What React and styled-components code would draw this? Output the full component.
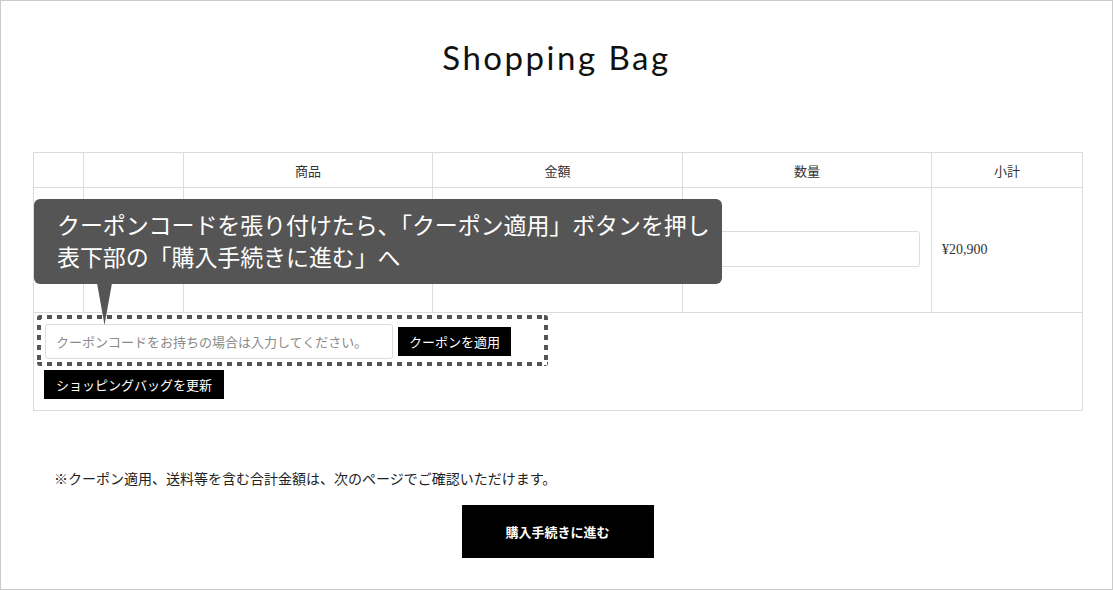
import React from 'react'
import styled, { createGlobalStyle } from 'styled-components';

const GlobalStyle = createGlobalStyle`
    html, body {
        margin: 0;
        padding: 0;
        background: #fff;
    }
    * {
        box-sizing: border-box;
    }
`;

const serif = `"Liberation Serif", "Noto Sans CJK JP", serif`;
const sans = `"Noto Sans CJK JP", "Noto Sans", sans-serif`;

const App = () => {
    return (
        <>
            <GlobalStyle />
            <Frame>
                <Title>Shopping Bag</Title>
                <TableWrap>
                    <CartTable>
                        <colgroup>
                            <col style={{ width: 50 }} />
                            <col style={{ width: 100 }} />
                            <col style={{ width: 249 }} />
                            <col style={{ width: 250 }} />
                            <col style={{ width: 249 }} />
                            <col style={{ width: 151 }} />
                        </colgroup>
                        <thead>
                            <HeadRow>
                                <HeadCell></HeadCell>
                                <HeadCell></HeadCell>
                                <HeadCell>商品</HeadCell>
                                <HeadCell>金額</HeadCell>
                                <HeadCell>数量</HeadCell>
                                <HeadCell>小計</HeadCell>
                            </HeadRow>
                        </thead>
                        <tbody>
                            <ItemRow>
                                <BodyCell></BodyCell>
                                <BodyCell></BodyCell>
                                <BodyCell></BodyCell>
                                <BodyCell></BodyCell>
                                <BodyCell $pad="0 11px">
                                    <QtyInput type="text" defaultValue="" />
                                </BodyCell>
                                <BodyCell $pad="0 10px">¥20,900</BodyCell>
                            </ItemRow>
                            <tr>
                                <ActionCell colSpan={6}>
                                    <CouponBox>
                                        <CouponInput type="text" placeholder="クーポンコードをお持ちの場合は入力してください。" />
                                        <BlackButton $w="113px" $h="29px">クーポンを適用</BlackButton>
                                    </CouponBox>
                                    <UpdateButton $w="180px" $h="29px">ショッピングバッグを更新</UpdateButton>
                                </ActionCell>
                            </tr>
                        </tbody>
                    </CartTable>
                    <Balloon>
                        クーポンコードを張り付けたら、「クーポン適用」ボタンを押し<br />
                        表下部の「購入手続きに進む」へ
                    </Balloon>
                    <BalloonTail />
                </TableWrap>
                <Note>※クーポン適用、送料等を含む合計金額は、次のページでご確認いただけます。</Note>
                <CheckoutButton>購入手続きに進む</CheckoutButton>
            </Frame>
        </>
    )
}

export default App;

const Frame = styled.div`
    width: 1113px;
    height: 590px;
    border: 1px solid #cbcbcb;
    background: #fff;
    overflow: hidden;
`;

const Title = styled.h1`
    margin: 36px 0 0;
    font-family: "Lato", "Open Sans", sans-serif;
    font-weight: 400;
    font-size: 33px;
    line-height: 40px;
    letter-spacing: 2.5px;
    text-align: center;
    color: #111;
`;

const TableWrap = styled.div`
    position: relative;
    margin: 75px 30px 0 32px;
`;

const CartTable = styled.table`
    width: 1049px;
    border-collapse: collapse;
    table-layout: fixed;
    font-family: ${serif};
    font-size: 13px;
    color: #333;
`;

const HeadRow = styled.tr`
    height: 35px;
`;

const HeadCell = styled.th`
    border: 1px solid #dcdcdc;
    font-weight: 400;
    text-align: center;
    padding: 0;
`;

const ItemRow = styled.tr`
    height: 125px;
`;

const BodyCell = styled.td`
    border: 1px solid #dcdcdc;
    padding: ${p => p.$pad || '0'};
    vertical-align: middle;
    font-size: 14px;
`;

const QtyInput = styled.input`
    display: block;
    width: 100%;
    height: 36px;
    border: 1px solid #dcdcdc;
    border-radius: 3px;
    outline: none;
    margin-top: -2px;
`;

const ActionCell = styled.td`
    border: 1px solid #dcdcdc;
    padding: 2px 3px 11px;
    vertical-align: top;
`;

const dash = (dir) => `repeating-linear-gradient(${dir}, #555 0 5px, transparent 5px 10px)`;

const CouponBox = styled.div`
    display: flex;
    align-items: center;
    gap: 5px;
    width: 511px;
    height: 51px;
    padding: 5px 8px 3px 8px;
    background:
        ${dash('90deg')} top left / 100% 4px no-repeat,
        ${dash('90deg')} bottom left / 100% 4px no-repeat,
        ${dash('180deg')} top left / 4px 100% no-repeat,
        ${dash('180deg')} top right / 4px 100% no-repeat;
    border-radius: 3px;
`;

const CouponInput = styled.input`
    width: 348px;
    height: 35px;
    border: 1px solid #dcdcdc;
    border-radius: 3px;
    padding: 0 10px;
    font-family: ${sans};
    font-size: 13px;
    outline: none;

    &::placeholder {
        color: #8a8a8a;
    }
`;

const BlackButton = styled.button`
    width: ${p => p.$w};
    height: ${p => p.$h};
    border: 0;
    border-radius: 0;
    background: #000;
    color: #fff;
    font-family: ${sans};
    font-size: 13px;
    padding: 0;
    cursor: pointer;
`;

const UpdateButton = styled(BlackButton)`
    display: block;
    margin: 4px 0 0 7px;
`;

const Balloon = styled.div`
    position: absolute;
    top: 47px;
    left: 1px;
    width: 688px;
    height: 85px;
    padding: 9px 0 0 23px;
    background: #555;
    border-radius: 6px;
    color: #fff;
    font-family: ${sans};
    font-size: 23px;
    line-height: 32px;
    white-space: nowrap;
    letter-spacing: -0.1px;
`;

const BalloonTail = styled.div`
    position: absolute;
    top: 131px;
    left: 64px;
    width: 15px;
    height: 42px;
    background: #555;
    clip-path: polygon(0 0, 100% 0, 50% 100%);
`;

const Note = styled.p`
    margin: 59px 0 0 53px;
    font-family: ${serif};
    font-size: 14px;
    line-height: 20px;
    letter-spacing: 0;
    color: #222;
`;

const CheckoutButton = styled.button`
    display: block;
    width: 192px;
    height: 53px;
    margin: 15px auto 0;
    position: relative;
    left: 1px;
    border: 0;
    background: #000;
    color: #fff;
    font-family: ${sans};
    font-weight: 700;
    font-size: 13px;
    cursor: pointer;
`;
